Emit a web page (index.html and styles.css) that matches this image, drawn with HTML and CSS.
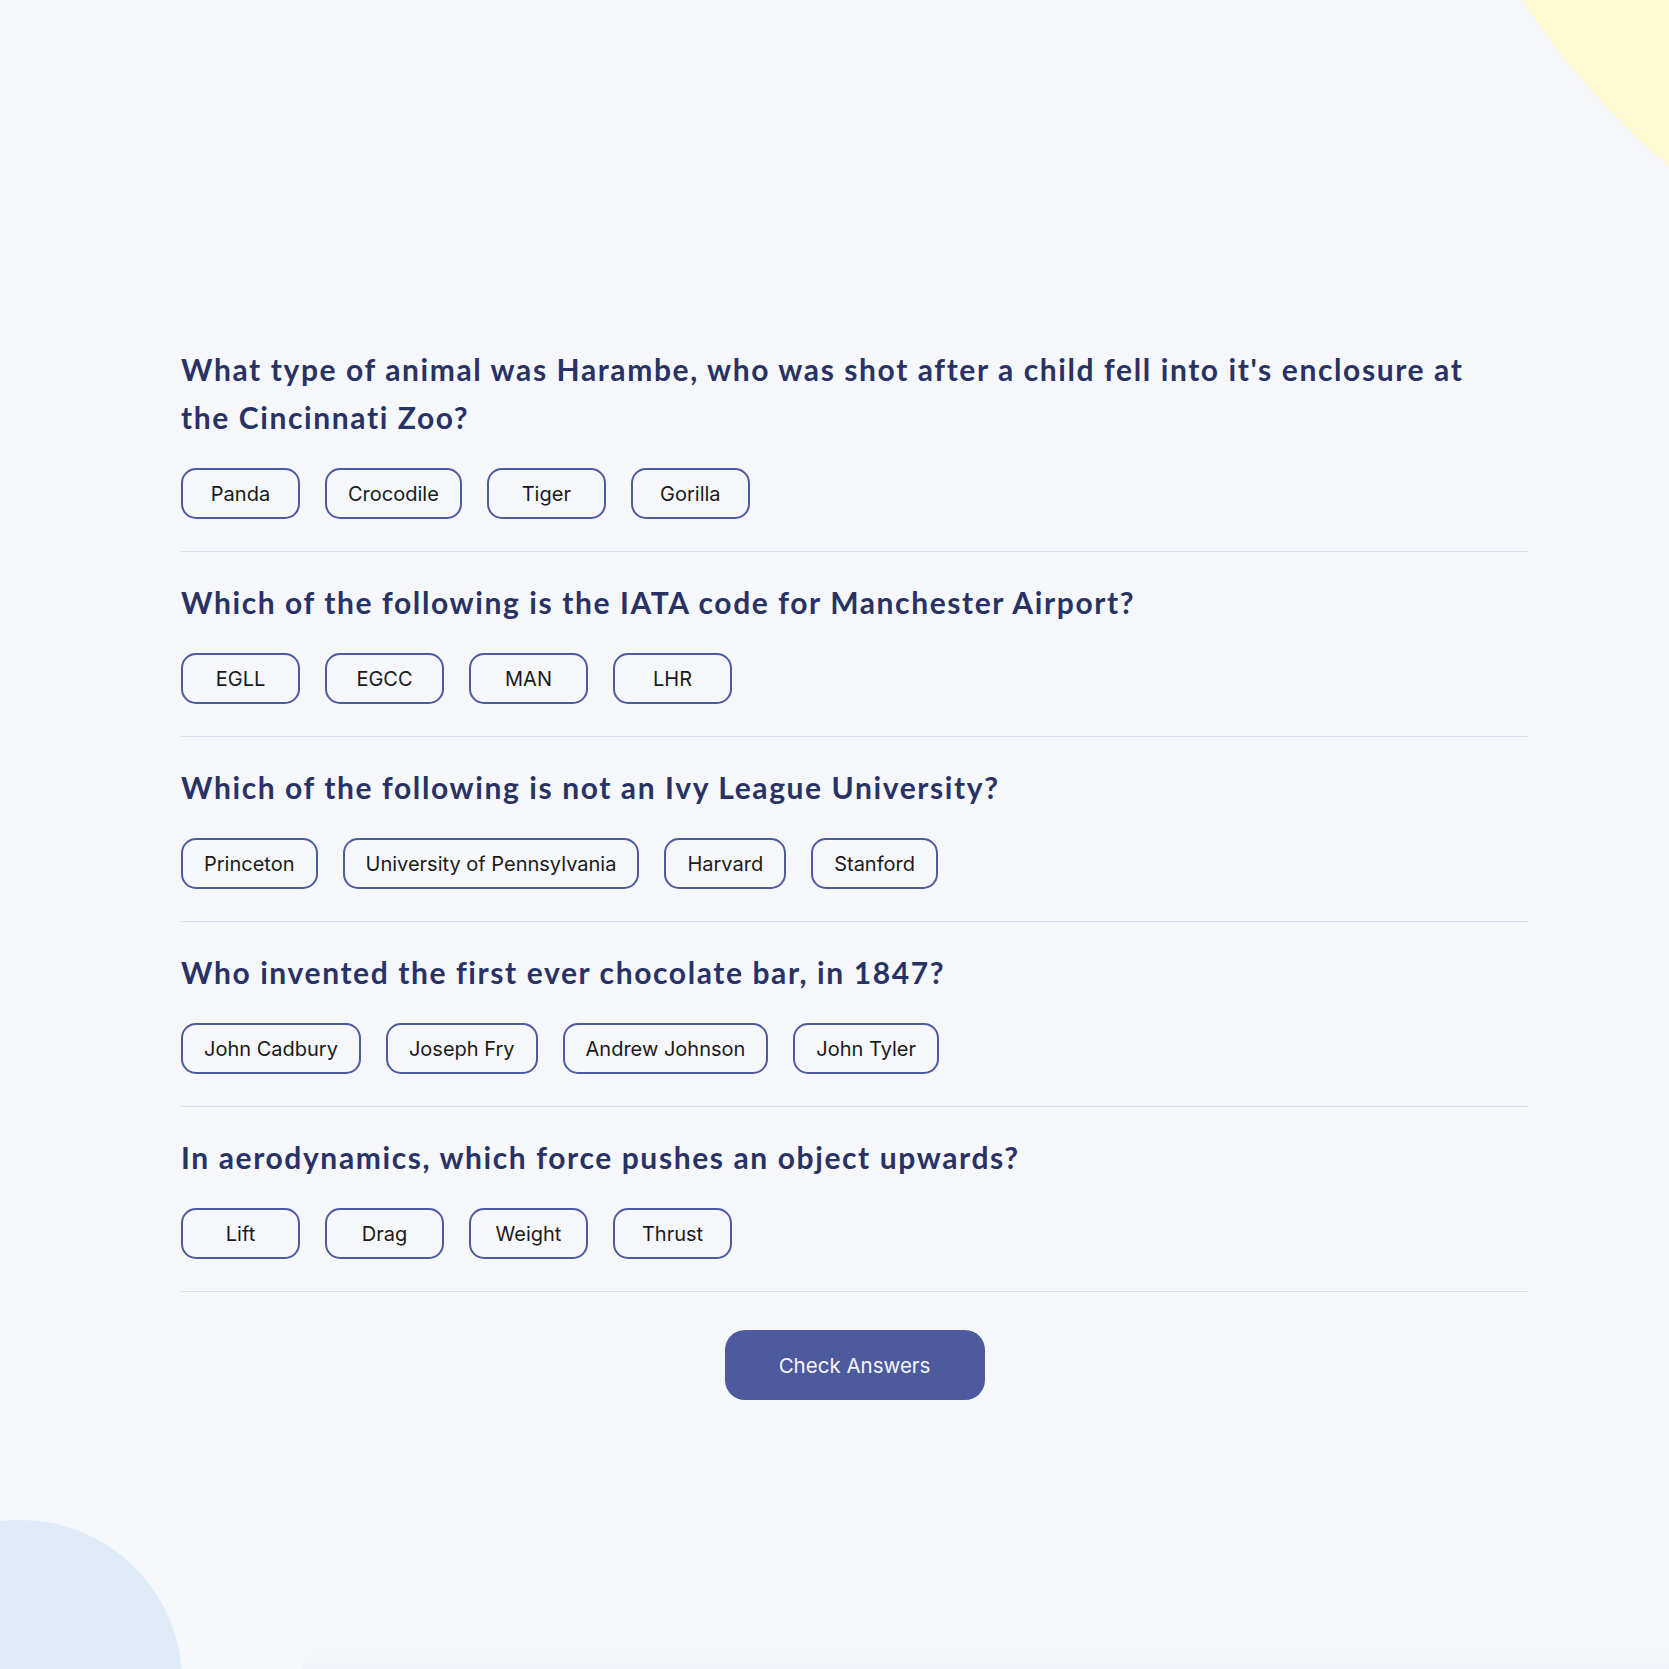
FILE: index.html
```html
<!DOCTYPE html>
<html lang="en">
<head>
<meta charset="utf-8">
<title>Quizzical</title>
<link rel="stylesheet" href="styles.css">
</head>
<body>
<div class="page">
  <div class="blob blob-yellow"></div>
  <div class="blob blob-blue"></div>
  <div class="shade"></div>
  <main class="quiz">
    <section class="question">
      <h2 class="q-title">What type of animal was Harambe, who was shot after a child fell into it's enclosure at the Cincinnati Zoo?</h2>
      <div class="answers">
        <button class="answer">Panda</button>
        <button class="answer">Crocodile</button>
        <button class="answer">Tiger</button>
        <button class="answer">Gorilla</button>
      </div>
    </section>
    <section class="question">
      <h2 class="q-title">Which of the following is the IATA code for Manchester Airport?</h2>
      <div class="answers">
        <button class="answer">EGLL</button>
        <button class="answer">EGCC</button>
        <button class="answer">MAN</button>
        <button class="answer">LHR</button>
      </div>
    </section>
    <section class="question">
      <h2 class="q-title">Which of the following is not an Ivy League University?</h2>
      <div class="answers">
        <button class="answer">Princeton</button>
        <button class="answer">University of Pennsylvania</button>
        <button class="answer">Harvard</button>
        <button class="answer">Stanford</button>
      </div>
    </section>
    <section class="question">
      <h2 class="q-title">Who invented the first ever chocolate bar, in 1847?</h2>
      <div class="answers">
        <button class="answer">John Cadbury</button>
        <button class="answer">Joseph Fry</button>
        <button class="answer">Andrew Johnson</button>
        <button class="answer">John Tyler</button>
      </div>
    </section>
    <section class="question">
      <h2 class="q-title">In aerodynamics, which force pushes an object upwards?</h2>
      <div class="answers">
        <button class="answer">Lift</button>
        <button class="answer">Drag</button>
        <button class="answer">Weight</button>
        <button class="answer">Thrust</button>
      </div>
    </section>
    <div class="actions">
      <button class="check">Check Answers</button>
    </div>
  </main>
</div>
</body>
</html>
```

FILE: styles.css
```css
html, body {
  margin: 0;
  padding: 0;
  background: #F5F7FB;
}

.page {
  position: relative;
  width: 1669px;
  height: 1669px;
  overflow: hidden;
  background: #F5F7FB;
}

.blob {
  position: absolute;
  border-radius: 50%;
}

.blob-yellow {
  left: 1393px;
  top: -1212px;
  width: 1564px;
  height: 1564px;
  background: #FFFAD1;
}

.blob-blue {
  left: -141px;
  top: 1520px;
  width: 323px;
  height: 323px;
  background: #DEEBF8;
}

.shade {
  position: absolute;
  left: 300px;
  right: 0;
  top: 1640px;
  height: 40px;
  border-top-left-radius: 60px;
  background: linear-gradient(to bottom, rgba(41, 50, 100, 0), rgba(41, 50, 100, 0.025));
}

.quiz {
  position: relative;
  width: 1347px;
  margin-left: 181px;
  padding-top: 319px;
}

.question {
  padding: 26px 0 32px;
  border-bottom: 1px solid #DBDEF0;
}

.q-title {
  max-width: 1320px;
  margin: 0 0 27px;
  font-family: Lato, "Open Sans", sans-serif;
  font-weight: 700;
  font-size: 30px;
  line-height: 48px;
  letter-spacing: 1.6px;
  color: #293264;
}

.answers {
  display: flex;
  gap: 25px;
}

.answer {
  box-sizing: border-box;
  min-width: 119px;
  height: 51px;
  padding: 0 21px;
  border: 2px solid #4D5B9E;
  border-radius: 15px;
  background: transparent;
  font-family: Inter, "Noto Sans", sans-serif;
  font-size: 20px;
  font-weight: 400;
  color: #1a1a1a;
}

.actions {
  display: flex;
  justify-content: center;
  padding-top: 38px;
}

.check {
  width: 260px;
  height: 70px;
  border: none;
  border-radius: 20px;
  background: #4D5B9E;
  color: #F5F7FB;
  font-family: Inter, "Noto Sans", sans-serif;
  font-size: 20.5px;
  font-weight: 400;
}
```
